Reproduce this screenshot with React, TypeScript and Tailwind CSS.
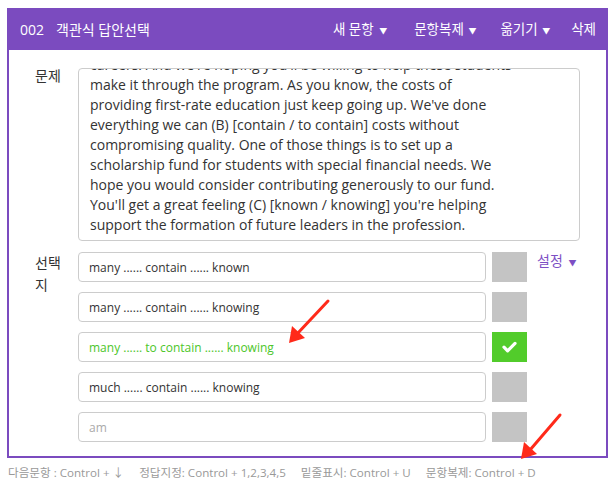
import React from "react";

const passage = [
  "careers. And we're hoping you'll be willing to help these students",
  "make it through the program. As you know, the costs of",
  "providing first-rate education just keep going up. We've done",
  "everything we can (B) [contain / to contain] costs without",
  "compromising quality. One of those things is to set up a",
  "scholarship fund for students with special financial needs. We",
  "hope you would consider contributing generously to our fund.",
  "You'll get a great feeling (C) [known / knowing] you're helping",
  "support the formation of future leaders in the profession.",
];

const choices = [
  { text: "many ...... contain ...... known", correct: false },
  { text: "many ...... contain ...... knowing", correct: false },
  { text: "many ...... to contain ...... knowing", correct: true },
  { text: "much ...... contain ...... knowing", correct: false },
  { text: "", placeholder: "am", correct: false },
];

const font = "font-['Open_Sans','Noto_Sans_CJK_KR',sans-serif]";

export default function App() {
  return (
    <div className={`relative w-[616px] h-[491px] bg-white ${font}`}>
      <div className="pt-[8px] pl-[7px]">
        <div className="w-[601px]">
          {/* Header */}
          <div className="h-[42px] bg-[#7b4bbf] flex items-center pl-[13px] pr-[12px] text-white text-[14px]">
            <span>002</span>
            <span className="ml-[12px]">객관식 답안선택</span>
            <div className="ml-auto flex items-center text-[13.5px]">
              <span>
                새 문항 <span className="text-[8px] ml-[2px]">▼</span>
              </span>
              <span className="ml-[27px]">
                문항복제 <span className="text-[8px] ml-[1px]">▼</span>
              </span>
              <span className="ml-[24px]">
                옮기기 <span className="text-[8px] ml-[1px]">▼</span>
              </span>
              <span className="ml-[21px]">삭제</span>
            </div>
          </div>

          {/* Body */}
          <div className="border-x-2 border-b-2 border-[#7b4bbf] pt-[18px] pb-[14px]">
            {/* Question */}
            <div className="flex">
              <div className="w-[69px] pl-[26px] -mt-[2px] text-[14px] leading-5 text-[#333]">
                문제
              </div>
              <div className="w-[502px] h-[173px] border border-[#ccc] rounded-[4px] overflow-hidden pl-[11px]">
                <div className="-mt-[14px] text-[14px] leading-5 text-[#333]">
                  {passage.map((line, i) => (
                    <div key={i} className="whitespace-nowrap">
                      {line}
                    </div>
                  ))}
                </div>
              </div>
            </div>

            {/* Choices */}
            <div className="flex mt-[11px]">
              <div className="w-[69px] pl-[26px] text-[14px] leading-[22px] text-[#333]">
                선택
                <br />지
              </div>
              <div className="flex flex-col gap-[10px]">
                {choices.map((c, i) => (
                  <div key={i} className="flex items-start">
                    <div
                      className={`w-[408px] h-[30px] border border-[#ccc] rounded-[4px] flex items-center pl-[10px] text-[12px] pt-[1px] ${
                        c.correct ? "text-[#4cc62a]" : "text-[#333]"
                      }`}
                    >
                      {c.text ? c.text : <span className="text-[#aaa]">{c.placeholder}</span>}
                    </div>
                    <div
                      className={`ml-[6px] w-[35px] h-[30px] flex items-center justify-center ${
                        c.correct ? "bg-[#52cc2b]" : "bg-[#c4c4c4]"
                      }`}
                    >
                      {c.correct && (
                        <svg width="15" height="12" viewBox="0 0 15 12">
                          <path
                            d="M2 6.2l3.6 3.6L13 2.4"
                            fill="none"
                            stroke="#fff"
                            strokeWidth="3.2"
                            strokeLinecap="round"
                            strokeLinejoin="round"
                          />
                        </svg>
                      )}
                    </div>
                    {i === 0 && (
                      <span className="ml-[10px] -mt-[1px] text-[14px] leading-5 text-[#7d4fc4]">
                        설정 <span className="text-[8px] ml-[2px]">▼</span>
                      </span>
                    )}
                  </div>
                ))}
              </div>
            </div>
          </div>
        </div>

        {/* Shortcut hints */}
        <div className="flex gap-[15px] mt-[6px] pl-[1px] text-[11.6px] text-[#999] whitespace-nowrap">
          <span>다음문항 : Control + ↓</span>
          <span>정답지정: Control + 1,2,3,4,5</span>
          <span>밑줄표시: Control + U</span>
          <span>문항복제: Control + D</span>
        </div>
      </div>

      {/* Annotation arrows */}
      <svg
        className="absolute inset-0 pointer-events-none"
        width="616"
        height="491"
        viewBox="0 0 616 491"
      >
        <line x1="328" y1="301" x2="297" y2="334" stroke="#ff2a1a" strokeWidth="3" strokeLinecap="round" />
        <polygon points="289,343 292,326 305,338" fill="#ff2a1a" />
        <line x1="560" y1="415" x2="530" y2="450" stroke="#ff2a1a" strokeWidth="3" strokeLinecap="round" />
        <polygon points="521,459 524,442 537,454" fill="#ff2a1a" />
      </svg>
    </div>
  );
}
